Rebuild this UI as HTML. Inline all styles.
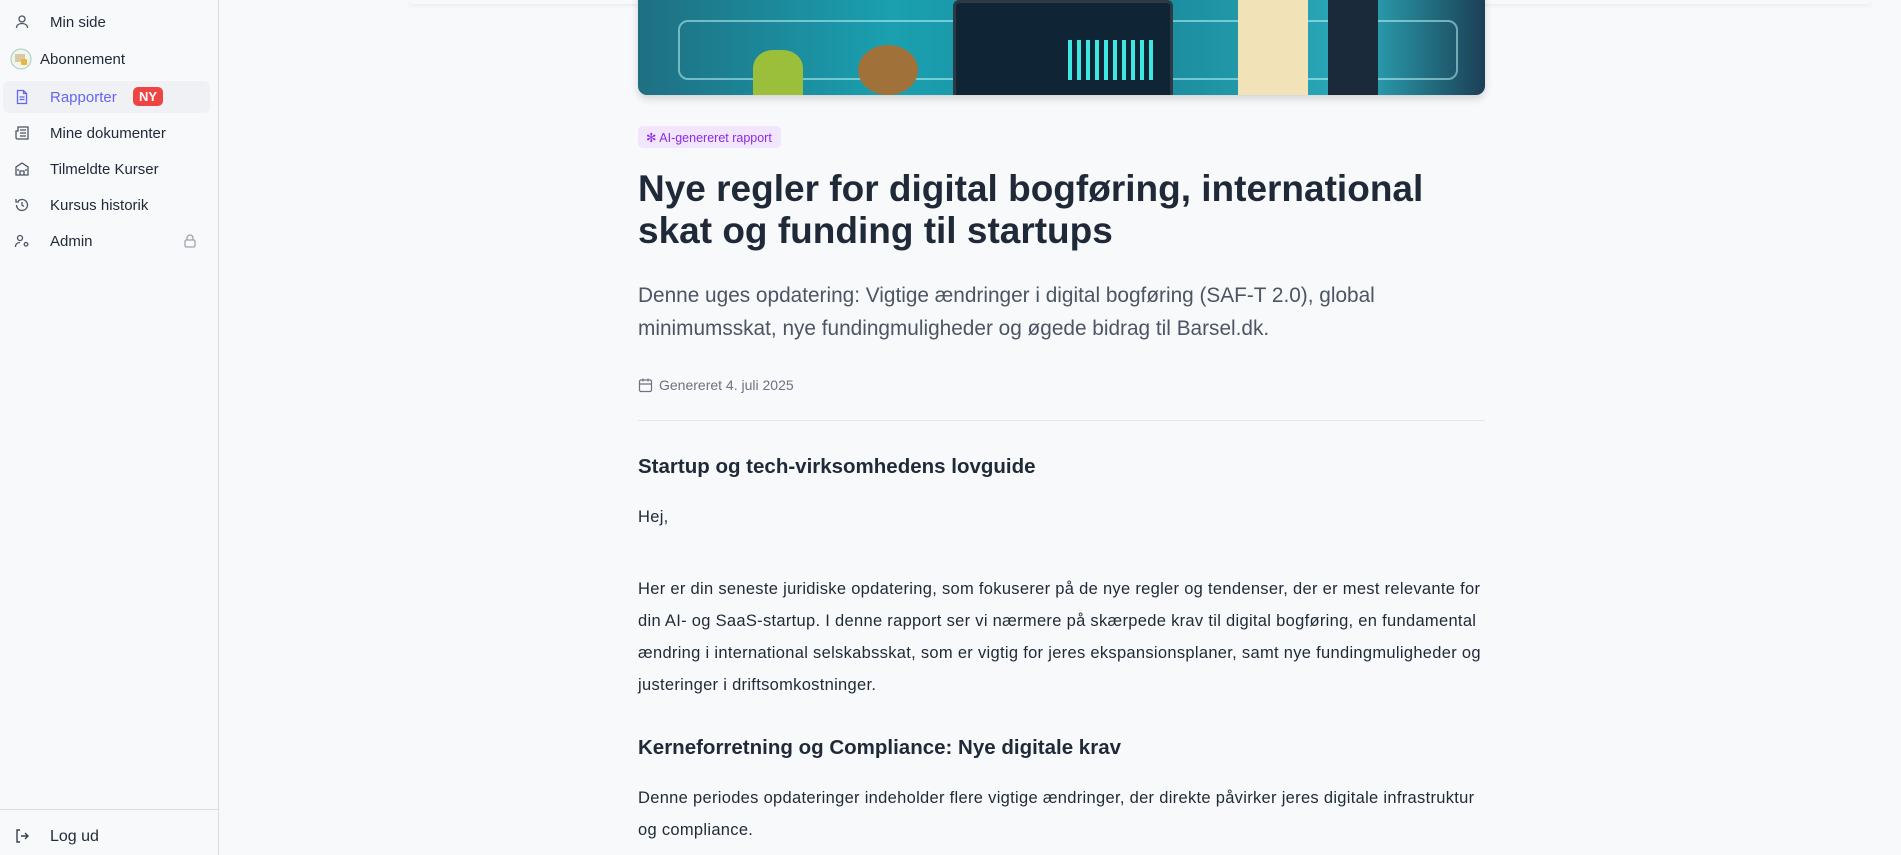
<!DOCTYPE html>
<html><head><meta charset="utf-8"><style>
*{box-sizing:border-box;margin:0;padding:0}
body{width:1901px;height:855px;overflow:hidden;background:#f8f9fb;font-family:"Liberation Sans",sans-serif;color:#1f2937;position:relative}
.side{position:absolute;left:0;top:0;width:219px;height:855px;border-right:1px solid #d9dce1;background:#f8f9fb}
.item{position:absolute;left:0;width:219px;height:32px;font-size:15px;color:#1f2937}
.item span.t{position:absolute;left:50px;top:8px}
.item svg{position:absolute;left:14px;top:8px}
.active{left:3px!important;width:207px!important;background:#f0f1f4;border-radius:6px}
.ny{position:absolute;left:130px;top:6px;background:#ef4444;color:#fff;font-weight:bold;font-size:13px;padding:2px 6px;border-radius:5px}
.logout{position:absolute;left:0;top:809px;width:219px;border-top:1px solid #d9dce1;height:46px}
.main{position:absolute;left:638px;width:847px}
.p{font-size:16.5px;letter-spacing:.3px;line-height:32px;color:#1f2937;white-space:nowrap}
h2{font-size:20.5px;font-weight:bold;color:#1f2937;position:absolute;left:0}
</style></head><body>
<div style="position:absolute;left:410px;top:0;width:1460px;height:4px;box-shadow:0 1px 5px rgba(0,0,0,.08)"></div>
<div class="side">
 <div class="item" style="top:6px"><svg width="16" height="16" viewBox="0 0 16 16" fill="none" stroke="#4b5563" stroke-width="1.3"><circle cx="8" cy="5" r="3"/><path d="M2.5 14c0-3 2.5-4.5 5.5-4.5s5.5 1.5 5.5 4.5"/></svg><span class="t">Min side</span></div>
 <div class="item" style="top:43px"><svg width="22" height="22" viewBox="0 0 22 22" style="left:10px;top:5px"><circle cx="11" cy="11" r="10" fill="#f4f4ef" stroke="#9ccfb8"/><rect x="5" y="6" width="10" height="8" fill="#d8c9a8"/><rect x="11" y="11" width="6" height="6" rx="1" fill="#e5b840"/></svg><span class="t" style="left:40px">Abonnement</span></div>
 <div class="item active" style="top:81px"><svg width="16" height="16" viewBox="0 0 16 16" fill="none" stroke="#6366f1" stroke-width="1.3" style="left:11px"><path d="M3.5 1.5h6l3 3v10h-9z M9.5 1.5v3h3 M5.5 8h5 M5.5 10.5h5"/></svg><span class="t" style="left:47px;color:#6366f1">Rapporter</span><span class="ny">NY</span></div>
 <div class="item" style="top:117px"><svg width="16" height="16" viewBox="0 0 16 16" fill="none" stroke="#4b5563" stroke-width="1.3"><path d="M4 2h10v12H3.5a1.5 1.5 0 0 1-1.5-1.5V6h2z M6 5h6 M6 8h6 M6 11h6"/></svg><span class="t">Mine dokumenter</span></div>
 <div class="item" style="top:153px"><svg width="16" height="16" viewBox="0 0 16 16" fill="none" stroke="#4b5563" stroke-width="1.3"><path d="M2 14V6l6-4 6 4v8z M6 14v-4h4v4 M4 8v2 M12 8v2"/></svg><span class="t">Tilmeldte Kurser</span></div>
 <div class="item" style="top:189px"><svg width="16" height="16" viewBox="0 0 16 16" fill="none" stroke="#4b5563" stroke-width="1.3"><path d="M2.5 8a5.5 5.5 0 1 0 1.6-3.9 M2 2v3h3 M8 5v3l2 1.5"/></svg><span class="t">Kursus historik</span></div>
 <div class="item" style="top:225px"><svg width="16" height="16" viewBox="0 0 16 16" fill="none" stroke="#4b5563" stroke-width="1.3"><circle cx="6" cy="5" r="2.5"/><path d="M1.5 14c0-3 2-4.5 4.5-4.5 M12 9.5a1.8 1.8 0 1 0 .01 0"/></svg><span class="t">Admin</span><svg width="16" height="16" viewBox="0 0 16 16" fill="none" stroke="#9ca3af" stroke-width="1.3" style="left:182px"><rect x="3" y="7" width="10" height="7" rx="1.5"/><path d="M5 7V5a3 3 0 0 1 6 0v2"/></svg></div>
 <div class="logout"><div class="item" style="top:10px"><svg width="16" height="16" viewBox="0 0 16 16" fill="none" stroke="#374151" stroke-width="1.4"><path d="M6 2H3v12h3 M7 8h7 M11 5l3 3-3 3"/></svg><span class="t" style="font-size:16px">Log ud</span></div></div>
</div>
<div class="main" style="top:-20px;height:115px;border-radius:0 0 9px 9px;overflow:hidden;box-shadow:0 4px 8px rgba(0,0,0,.15);background:linear-gradient(90deg,#1e6f82,#1aa0b0 30%,#1a8a9c 60%,#2aa9b8 85%,#1c3f55)">
 <div style="position:absolute;left:40px;top:40px;width:780px;height:60px;border:2px solid rgba(200,255,255,.5);border-radius:10px"></div>
 <div style="position:absolute;left:315px;top:20px;width:220px;height:100px;background:#0f2535;border:3px solid #2b3a44;border-radius:6px"></div>
 <div style="position:absolute;left:430px;top:60px;width:90px;height:40px;background:repeating-linear-gradient(90deg,#3ee8e0 0 4px,transparent 4px 9px)"></div>
 <div style="position:absolute;left:220px;top:65px;width:60px;height:50px;border-radius:50%;background:#a0723a"></div>
 <div style="position:absolute;left:115px;top:70px;width:50px;height:45px;background:#9bbf3a;border-radius:40% 40% 0 0"></div>
 <div style="position:absolute;left:600px;top:20px;width:70px;height:100px;background:#f1e2b8"></div>
 <div style="position:absolute;left:690px;top:20px;width:50px;height:100px;background:#1b2a3a"></div>
</div>
<div class="main" style="top:126px">
 <div style="display:inline-block;background:#f1e6fd;color:#8b2be2;font-size:12.5px;padding:4px 9px 4px 8px;border-radius:5px;height:22px">✻ AI-genereret rapport</div>
</div>
<div class="main" style="top:168px;font-size:37px;font-weight:bold;line-height:42px;color:#1f2937">Nye regler for digital bogføring, international skat og funding til startups</div>
<div class="main" style="top:279px;font-size:20.8px;line-height:33px;color:#4b5563">Denne uges opdatering: Vigtige ændringer i digital bogføring (SAF-T 2.0), global minimumsskat, nye fundingmuligheder og øgede bidrag til Barsel.dk.</div>
<div class="main" style="top:377px;font-size:14px;color:#6b7280"><svg width="15" height="16" viewBox="0 0 15 16" fill="none" stroke="#6b7280" stroke-width="1.2" style="vertical-align:-3px;margin-right:6px"><rect x="1.5" y="3" width="12" height="11.5" rx="1.5"/><path d="M1.5 7h12 M5 1.5v3 M10 1.5v3"/></svg>Genereret 4. juli 2025</div>
<div class="main" style="top:420px;height:1px;background:#e5e7eb"></div>
<div class="main" style="top:455px"><h2 style="top:0">Startup og tech-virksomhedens lovguide</h2></div>
<div class="main p" style="top:501px">Hej,</div>
<div class="main p" style="top:573px">Her er din seneste juridiske opdatering, som fokuserer på de nye regler og tendenser, der er mest relevante for<br>din AI- og SaaS-startup. I denne rapport ser vi nærmere på skærpede krav til digital bogføring, en fundamental<br>ændring i international selskabsskat, som er vigtig for jeres ekspansionsplaner, samt nye fundingmuligheder og<br>justeringer i driftsomkostninger.</div>
<div class="main" style="top:736px"><h2 style="top:0">Kerneforretning og Compliance: Nye digitale krav</h2></div>
<div class="main p" style="top:782px">Denne periodes opdateringer indeholder flere vigtige ændringer, der direkte påvirker jeres digitale infrastruktur<br>og compliance.</div>
</body></html>
